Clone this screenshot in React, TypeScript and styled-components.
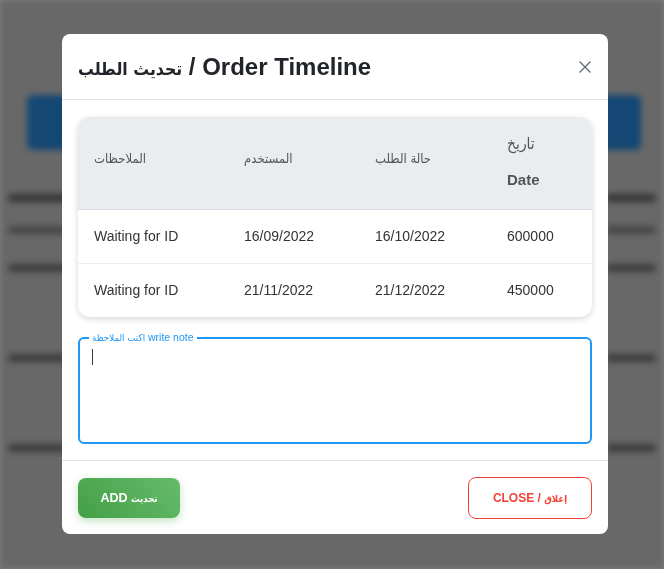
import styled, { createGlobalStyle } from "styled-components";

const GlobalStyle = createGlobalStyle`
    html, body {
        margin: 0;
        padding: 0;
        height: 100%;
        font-family: "Liberation Sans", "DejaVu Sans", Arial, sans-serif;
    }
`

/* page behind the dialog */
const Page = styled.div`
    width: 664px;
    height: 569px;
    background: #d0d0d0;
    filter: blur(3px);
    padding: 95px 23px 0 27px;
    box-sizing: border-box;
    display: flex;
    flex-direction: column;
    overflow: hidden;
`

const PageBar = styled.div`
    height: 55px;
    background: #2a8fe8;
    border-radius: 6px;
    margin-bottom: 44px;
`

const PageRow = styled.div<{ $h: number }>`
    display: flex;
    justify-content: space-between;
    margin-left: -27px;
    margin-right: -23px;
    height: ${p => p.$h}px;
    padding: 0 8px;
`

const PageText = styled.div<{ $w: number; $tone?: string }>`
    width: ${p => p.$w}px;
    height: 8px;
    background: ${p => p.$tone ?? "#7a7a7a"};
    border-radius: 4px;
`

const Backdrop = styled.div`
    position: fixed;
    inset: 0;
    background: rgba(0, 0, 0, 0.5);
    display: flex;
    align-items: flex-start;
`

const Modal = styled.div`
    width: 546px;
    height: 500px;
    margin: 34px 0 0 62px;
    background: #ffffff;
    border-radius: 8px;
    display: flex;
    flex-direction: column;
    overflow: hidden;
`

const Header = styled.div`
    height: 66px;
    box-sizing: border-box;
    display: flex;
    align-items: center;
    justify-content: space-between;
    padding: 1px 16px 0;
    border-bottom: 1px solid #dee2e6;
`

const Title = styled.h1`
    margin: 0;
    font-size: 24px;
    font-weight: 700;
    color: #212529;
`

/* arabic runs: the only installed arabic face is DejaVu, take the narrow cut */
const Ar = styled.span<{ $size?: number }>`
    font-family: "DejaVu Sans Condensed", "DejaVu Sans", sans-serif;
    font-size: ${p => (p.$size ? `${p.$size}px` : "inherit")};
`

const CloseIcon = styled.button`
    border: none;
    background: none;
    padding: 0;
    width: 14px;
    height: 14px;
    display: flex;
    cursor: pointer;
`

const Body = styled.div`
    padding: 17px 16px 16px;
    border-bottom: 1px solid #dee2e6;
`

const TableCard = styled.div`
    border-radius: 12px;
    overflow: hidden;
    box-shadow: 0 2px 6px rgba(0, 0, 0, 0.16);
`

const Table = styled.table`
    width: 100%;
    border-collapse: collapse;
    table-layout: fixed;
    font-size: 14px;
`

const HeadCell = styled.th<{ $w?: number; $stacked?: boolean }>`
    box-sizing: border-box;
    width: ${p => (p.$w ? `${p.$w}px` : "auto")};
    background: #eaedf0;
    color: #555555;
    font-weight: 500;
    text-align: left;
    padding: ${p => (p.$stacked ? "10px 16px 11px" : "10px 16px 20px")};
    line-height: 35px;
    border-bottom: 1px solid #d6dde4;
`

const EnLabel = styled.span`
    font-weight: 700;
    font-size: 15px;
`

const Cell = styled.td`
    color: #333333;
    padding: 16px;
    line-height: 21px;
    border-bottom: 1px solid #ebeef1;

    tr:last-child > & {
        border-bottom: none;
    }
`

const NoteField = styled.fieldset`
    margin: 14px 0 0;
    padding: 4px 12px;
    height: 113px;
    box-sizing: border-box;
    border: 2px solid #2196f3;
    border-radius: 6px;
`

const NoteLegend = styled.legend`
    padding: 0 3px;
    margin-left: -3px;
    font-size: 10.5px;
    font-weight: 500;
    color: #2196f3;
    line-height: 12px;
`

const Caret = styled.span`
    display: block;
    width: 1px;
    height: 16px;
    background: #333a44;
    margin-top: 1px;
`

const Footer = styled.div`
    flex: 1;
    display: flex;
    align-items: center;
    justify-content: space-between;
    padding: 0 16px;
`

const AddButton = styled.button`
    width: 102px;
    height: 40px;
    border: none;
    border-radius: 8px;
    background: linear-gradient(45deg, #43a047, #66bb6a);
    box-shadow: 0 3px 8px rgba(76, 175, 80, 0.35);
    color: #ffffff;
    font-family: inherit;
    font-weight: 700;
    font-size: 12.5px;
`

const CloseButton = styled.button`
    width: 124px;
    height: 42px;
    border: 1px solid #f44336;
    border-radius: 8px;
    background: #ffffff;
    color: #f44336;
    font-family: inherit;
    font-weight: 700;
    font-size: 12px;
`

const rows = [
    { note: "Waiting for ID", user: "16/09/2022", status: "16/10/2022", date: "600000" },
    { note: "Waiting for ID", user: "21/11/2022", status: "21/12/2022", date: "450000" },
];

export default function App() {
    return (
        <>
            <GlobalStyle />
            <Page>
                <PageBar />
                <PageRow $h={32}>
                    <PageText $w={160} $tone="#6a6a6a" />
                    <PageText $w={50} $tone="#6a6a6a" />
                </PageRow>
                <PageRow $h={38}>
                    <PageText $w={140} $tone="#8e8e8e" />
                    <PageText $w={50} $tone="#8e8e8e" />
                </PageRow>
                <PageRow $h={90}>
                    <PageText $w={60} />
                    <PageText $w={50} />
                </PageRow>
                <PageRow $h={90}>
                    <PageText $w={60} />
                    <PageText $w={50} />
                </PageRow>
                <PageRow $h={90}>
                    <PageText $w={60} />
                    <PageText $w={50} />
                </PageRow>
            </Page>
            <Backdrop>
                <Modal>
                    <Header>
                        <Title><Ar $size={17.5}>تحديث الطلب</Ar> / Order Timeline</Title>
                        <CloseIcon aria-label="close">
                            <svg width="14" height="14" viewBox="0 0 14 14">
                                <path d="M1.5 1.5 L12.5 12.5 M12.5 1.5 L1.5 12.5" stroke="#5f6b76" strokeWidth="1.3" />
                            </svg>
                        </CloseIcon>
                    </Header>
                    <Body>
                        <TableCard>
                            <Table>
                                <thead>
                                    <tr>
                                        <HeadCell $w={150}><Ar $size={13}>الملاحظات</Ar></HeadCell>
                                        <HeadCell $w={131}><Ar $size={13}>المستخدم</Ar></HeadCell>
                                        <HeadCell $w={132}><Ar $size={13}>حالة الطلب</Ar></HeadCell>
                                        <HeadCell $stacked>
                                            <Ar $size={15.5}>تاريخ</Ar>
                                            <br />
                                            <EnLabel>Date</EnLabel>
                                        </HeadCell>
                                    </tr>
                                </thead>
                                <tbody>
                                    {rows.map((r, i) => (
                                        <tr key={i}>
                                            <Cell>{r.note}</Cell>
                                            <Cell>{r.user}</Cell>
                                            <Cell>{r.status}</Cell>
                                            <Cell>{r.date}</Cell>
                                        </tr>
                                    ))}
                                </tbody>
                            </Table>
                        </TableCard>
                        <NoteField>
                            <NoteLegend><Ar $size={9.7}>اكتب الملاحظة</Ar> write note</NoteLegend>
                            <Caret />
                        </NoteField>
                    </Body>
                    <Footer>
                        <AddButton>ADD <Ar $size={9.5}>تحديث</Ar></AddButton>
                        <CloseButton>CLOSE / <Ar $size={9.5}>إغلاق</Ar></CloseButton>
                    </Footer>
                </Modal>
            </Backdrop>
        </>
    );
}
